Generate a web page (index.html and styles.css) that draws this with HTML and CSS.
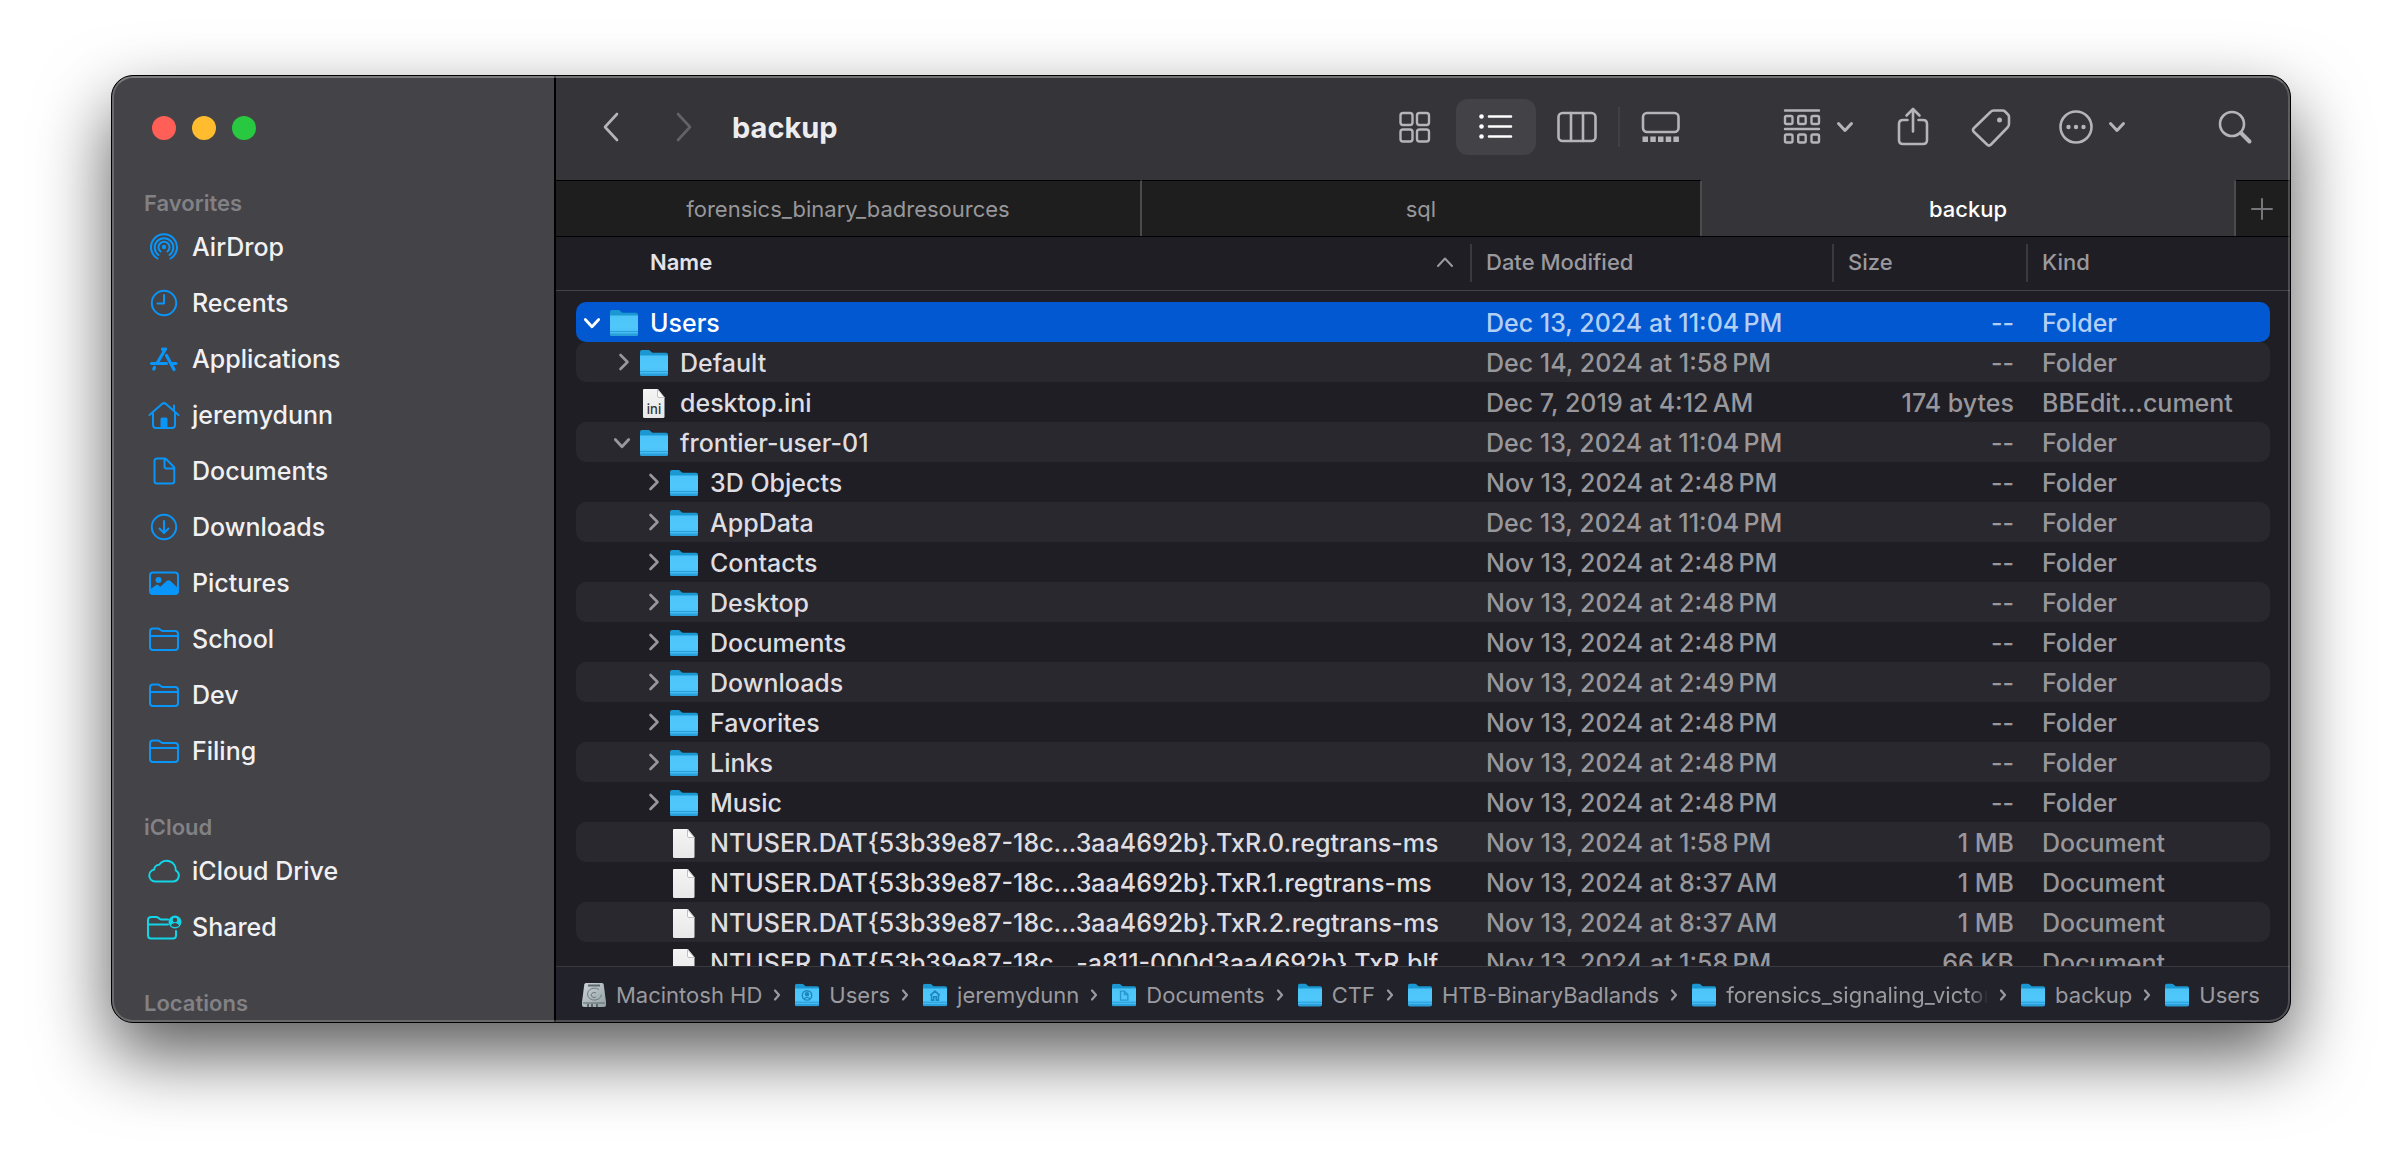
FILE: index.html
```html
<!DOCTYPE html>
<html lang="en">
<head>
<meta charset="utf-8">
<meta name="viewport" content="width=device-width, initial-scale=1">
<title>backup</title>
<link rel="stylesheet" href="styles.css">
</head>
<body>
<svg class="sprite" width="0" height="0" aria-hidden="true">
  <defs>
    <linearGradient id="folder-front" x1="0" y1="0" x2="0" y2="1">
      <stop offset="0" stop-color="#4cc4f8"/><stop offset=".6" stop-color="#50c8fc"/><stop offset="1" stop-color="#3eb4ee"/>
    </linearGradient>
    <linearGradient id="paper" x1="0" y1="0" x2="0" y2="1">
      <stop offset="0" stop-color="#f4f4f4"/><stop offset="1" stop-color="#e8e8e8"/>
    </linearGradient>
    <linearGradient id="disk" x1="0" y1="0" x2="1" y2="1">
      <stop offset="0" stop-color="#ccd5d8"/><stop offset="1" stop-color="#93a0a5"/>
    </linearGradient>
    <symbol id="folder" viewBox="0 0 28 26">
      <path fill="#1b98d2" d="M0 2a2 2 0 0 1 2-2h6c1 0 1.600.3 2.300 1l1 1c.5.5 1 .7 1.700.7H26a2 2 0 0 1 2 2V10H0z"/>
      <path fill="url(#folder-front)" d="M0 5.500h28V24a2 2 0 0 1-2 2H2a2 2 0 0 1-2-2z"/>
      <path fill="#2a9fda" d="M0 23.500h28v.5a2 2 0 0 1-2 2H2a2 2 0 0 1-2-2zM0 21h28v1H0z"/>
    </symbol>
    <symbol id="page" viewBox="0 0 24 29">
      <path fill="url(#paper)" d="M1.500 0H16l6.500 8.500v19a1.500 1.500 0 0 1-1.500 1.500H2.500A1.500 1.500 0 0 1 1 27.500V.5z"/>
      <path fill="#fff" stroke="#b4b4b4" stroke-width=".8" d="M15.500.5v6.500a1.500 1.500 0 0 0 1.500 1.500h5.500z"/>
    </symbol>
    <symbol id="right" viewBox="0 0 24 24"><path fill="none" stroke="currentColor" stroke-width="2.600" stroke-linecap="round" stroke-linejoin="round" d="m10.500 4 7 7-7 7"/></symbol>
    <symbol id="down" viewBox="0 0 24 24"><path fill="none" stroke="currentColor" stroke-width="2.800" stroke-linecap="round" stroke-linejoin="round" d="m5.300 8.500 6.700 7.200 6.700-7.200"/></symbol>
    <symbol id="crumb" viewBox="0 0 8 14"><path fill="none" stroke="currentColor" stroke-width="2.200" stroke-linecap="round" stroke-linejoin="round" d="m2 2.500 4 4.500-4 4.500"/></symbol>
    <symbol id="menu" viewBox="0 0 18 12"><path fill="none" stroke="currentColor" stroke-width="3" stroke-linecap="round" stroke-linejoin="round" d="m2.500 2.500 6.500 7 6.500-7"/></symbol>
    <symbol id="outline-folder" viewBox="0 0 32 32"><path d="M2 24V8.500Q2 5.500 5 5.500h4.500q1.500 0 2.500 1l1 .8q.8.700 2 .7H27q3 0 3 3V24q0 3-3 3H5q-3 0-3-3zM2 13h28"/></symbol>
  </defs>
</svg>

<div class="window">
  <aside class="sidebar">
    <div class="lights">
      <button class="light close" aria-label="Close"></button>
      <button class="light minimize" aria-label="Minimize"></button>
      <button class="light zoom" aria-label="Zoom"></button>
    </div>
    <nav aria-label="Places">
      <h2 class="group">Favorites</h2>
      <a class="place" href="#airdrop"><svg viewBox="0 0 32 32"><circle cx="16" cy="16" r="2.200" fill="currentColor" stroke="none"/><path d="M12.500 20.500a5.500 5.500 0 1 1 7 0M10.500 24a9.300 9.300 0 1 1 11 0M9.500 27.500a13 13 0 1 1 13 0"/></svg>AirDrop</a>
      <a class="place" href="#recents"><svg viewBox="0 0 32 32"><circle cx="16" cy="16" r="12.200"/><path d="M16 8v8.500H9.500"/></svg>Recents</a>
      <a class="place" href="#applications"><svg viewBox="0 0 32 32"><path stroke-width="3.200" d="M17.500 6 9.500 19.500M14.500 6l1.500 2.500M18.500 12.500 26 26.500M3.500 20.500h15M24.500 20.500h3.500M6.500 24.500 5.800 26"/></svg>Applications</a>
      <a class="place" href="#home"><svg viewBox="0 0 32 32"><path d="M1.500 16 14 5q2-1.700 4 0L30.500 16M5 14v11.500Q5 29 8 29h16q3 0 3-3V14M26 11.500V6.500"/><path fill="currentColor" stroke="none" d="M12.500 28.500V20q0-1.500 1.500-1.500h4q1.500 0 1.500 1.500v8.500z"/></svg>jeremydunn</a>
      <a class="place" href="#documents"><svg viewBox="0 0 32 32"><path d="M9 3.500h7.500q1 0 2 1l7 7q.8.800.8 2V26q0 2.500-2.500 2.500H9q-2.500 0-2.500-2.500V6Q6.500 3.500 9 3.500zM16.500 4v7.500q0 2 2 2H26"/></svg>Documents</a>
      <a class="place" href="#downloads"><svg viewBox="0 0 32 32"><circle cx="16" cy="16" r="12.200"/><path d="M16 10v11.500M11.500 17.500 16 22l4.500-4.500"/></svg>Downloads</a>
      <a class="place" href="#pictures"><svg viewBox="0 0 32 32"><rect x="2" y="5.500" width="28" height="21.500" rx="3"/><circle cx="10.500" cy="13" r="3" fill="currentColor" stroke="none"/><path fill="currentColor" d="m3 23 6-4.500 3.500 2.500 7-6.500q1-.7 2 0l8 7.500v2.500q0 1.500-2 1.500h-23q-1.500 0-1.500-1.500z"/></svg>Pictures</a>
      <a class="place" href="#school"><svg><use href="#outline-folder"/></svg>School</a>
      <a class="place" href="#dev"><svg><use href="#outline-folder"/></svg>Dev</a>
      <a class="place" href="#filing"><svg><use href="#outline-folder"/></svg>Filing</a>
      <h2 class="group">iCloud</h2>
      <a class="place cloud" href="#icloud-drive"><svg viewBox="0 0 32 32"><path d="M7 26.500a6 6 0 0 1-.8-11.900 5 5 0 0 1 5-4.800 9 9 0 0 1 16.500 5.500A6 6 0 0 1 25.500 26.500z"/></svg>iCloud Drive</a>
      <a class="place cloud" href="#shared"><svg viewBox="0 0 32 32"><path d="M20 8.500h-6.500q-1 0-2-.8l-1-.8q-1-.9-2.200-.9H3.500Q0 6 0 9v15.500q0 3 3 3h22q3 0 3-3V20M0 13.500h20"/><circle cx="27" cy="11" r="6.500" fill="currentColor" stroke="none"/><circle cx="27" cy="9" r="2.300" class="cut"/><path class="cut" d="M22.800 14.500q1.200-2.500 4.200-2.500t4.200 2.500q-1.700 1.500-4.200 1.500t-4.200-1.500z"/></svg>Shared</a>
      <h2 class="group">Locations</h2>
    </nav>
  </aside>

  <main class="main">
    <header class="toolbar">
      <button class="nav" aria-label="Back"><svg width="20" height="32" viewBox="0 0 20 32"><path d="M16 3 4 16l12 13"/></svg></button>
      <button class="nav" aria-label="Forward" disabled><svg width="20" height="32" viewBox="0 0 20 32"><path d="m4 3 12 13L4 29"/></svg></button>
      <h1 class="title">backup</h1>
      <div class="views">
        <button class="view" aria-label="Icons"><svg width="40" height="40" viewBox="0 0 40 40"><g stroke-width="2.400"><rect x="5.500" y="6" width="12" height="12" rx="2.500"/><rect x="22" y="6" width="12" height="12" rx="2.500"/><rect x="5.500" y="22.500" width="12" height="12" rx="2.500"/><rect x="22" y="22.500" width="12" height="12" rx="2.500"/></g></svg></button>
        <button class="view" aria-label="List" aria-pressed="true"><svg width="40" height="40" viewBox="0 0 40 40"><path d="M13 9.500h22M13 19.500h22M13 29.500h22" stroke-width="2.600"/><g fill="currentColor" stroke="none"><circle cx="5.500" cy="9.500" r="2.300"/><circle cx="5.500" cy="19.500" r="2.300"/><circle cx="5.500" cy="29.500" r="2.300"/></g></svg></button>
        <button class="view" aria-label="Columns"><svg width="40" height="40" viewBox="0 0 40 40"><rect x="1.500" y="6" width="37" height="28" rx="4"/><path d="M14 6v28M26 6v28"/></svg></button>
        <span class="split"></span>
        <button class="view" aria-label="Gallery"><svg width="40" height="40" viewBox="0 0 40 40"><rect x="2" y="6" width="35.500" height="19" rx="4"/><path fill="currentColor" stroke="none" d="M1.500 29.500h5.500V35H1.500zm7.800 0h5.500V35H9.300zm7.700 0h5.500V35H17zm7.700 0h5.500V35h-5.500zm7.700 0h5.500V35h-5.500z"/></svg></button>
      </div>
      <div class="tools">
        <button class="tool" aria-label="Group"><svg width="40" height="40" viewBox="0 0 40 40"><path d="M3 3.500h34M3 22h34" stroke-width="2.400"/><g stroke-width="2.400"><rect x="3" y="9" width="7.500" height="8" rx="1.500"/><rect x="16.200" y="9" width="7.500" height="8" rx="1.500"/><rect x="29.500" y="9" width="7.500" height="8" rx="1.500"/><rect x="3" y="27.500" width="7.500" height="8" rx="1.500"/><rect x="16.200" y="27.500" width="7.500" height="8" rx="1.500"/><rect x="29.500" y="27.500" width="7.500" height="8" rx="1.500"/></g></svg><svg width="18" height="12"><use href="#menu"/></svg></button>
        <button class="tool share" aria-label="Share"><svg width="40" height="40" viewBox="0 0 40 40"><path d="M14.500 13H10q-4 0-4 4v16q0 4 4 4h20q4 0 4-4V17q0-4-4-4h-4.500M20 24.500V2.500M13.500 8.500l6.500-6.500 6.500 6.500"/></svg></button>
        <button class="tool tags" aria-label="Tags"><svg width="40" height="40" viewBox="0 0 40 40"><path d="M22.500 3.500h9q1.500 0 2.500 1l3 3q1 1 1 2.500V17q0 2-1.500 3.500L20 37.500q-2 2-4 0L3 25q-2-2 0-4L19.500 5q1.300-1.500 3-1.500z"/><circle cx="28.500" cy="13" r="2.500" fill="currentColor" stroke="none"/></svg></button>
        <button class="tool more" aria-label="More"><svg width="40" height="40" viewBox="0 0 40 40"><circle cx="20" cy="20" r="15.500"/><g fill="currentColor" stroke="none"><circle cx="12.500" cy="20" r="2.200"/><circle cx="20" cy="20" r="2.200"/><circle cx="27.500" cy="20" r="2.200"/></g></svg><svg width="18" height="12"><use href="#menu"/></svg></button>
        <button class="tool search" aria-label="Search"><svg width="40" height="40" viewBox="0 0 40 40"><circle cx="17" cy="17" r="12"/><path d="M26 26l8.500 8.500" stroke-width="4"/></svg></button>
      </div>
    </header>

    <div class="tabs" role="tablist">
      <button class="tab wide" role="tab">forensics_binary_badresources</button>
      <button class="tab" role="tab">sql</button>
      <button class="tab narrow" role="tab" aria-selected="true">backup</button>
      <button class="add" aria-label="New tab"><svg width="24" height="24" viewBox="0 0 24 24"><path d="M12 2v20M2 12h20"/></svg></button>
    </div>

    <table class="files">
      <thead>
        <tr><th scope="col" class="sorted">Name<svg width="16" height="10" viewBox="0 0 16 10"><path d="m1 9 7-7.500L15 9"/></svg></th><th scope="col">Date Modified</th><th scope="col">Size</th><th scope="col">Kind</th></tr>
      </thead>
      <tbody>
        <tr class="selected"><td class="name"><button class="twist" aria-label="Collapse"><svg><use href="#down"/></svg></button><svg class="icon"><use href="#folder"/></svg>Users</td><td>Dec 13, 2024 at 11:04&#8201;PM</td><td>--</td><td>Folder</td></tr>
        <tr><td class="name l1"><button class="twist" aria-label="Expand"><svg><use href="#right"/></svg></button><svg class="icon"><use href="#folder"/></svg>Default</td><td>Dec 14, 2024 at 1:58&#8201;PM</td><td>--</td><td>Folder</td></tr>
        <tr><td class="name l1"><span class="twist"></span><svg class="icon paper" viewBox="0 0 28 29"><use href="#page" x="2" width="24" height="29"/><text x="14" y="25" class="ext">ini</text></svg>desktop.ini</td><td>Dec 7, 2019 at 4:12&#8201;AM</td><td>174 bytes</td><td>BBEdit...cument</td></tr>
        <tr><td class="name l1"><button class="twist" aria-label="Collapse"><svg><use href="#down"/></svg></button><svg class="icon"><use href="#folder"/></svg>frontier-user-01</td><td>Dec 13, 2024 at 11:04&#8201;PM</td><td>--</td><td>Folder</td></tr>
        <tr><td class="name l2"><button class="twist" aria-label="Expand"><svg><use href="#right"/></svg></button><svg class="icon"><use href="#folder"/></svg>3D Objects</td><td>Nov 13, 2024 at 2:48&#8201;PM</td><td>--</td><td>Folder</td></tr>
        <tr><td class="name l2"><button class="twist" aria-label="Expand"><svg><use href="#right"/></svg></button><svg class="icon"><use href="#folder"/></svg>AppData</td><td>Dec 13, 2024 at 11:04&#8201;PM</td><td>--</td><td>Folder</td></tr>
        <tr><td class="name l2"><button class="twist" aria-label="Expand"><svg><use href="#right"/></svg></button><svg class="icon"><use href="#folder"/></svg>Contacts</td><td>Nov 13, 2024 at 2:48&#8201;PM</td><td>--</td><td>Folder</td></tr>
        <tr><td class="name l2"><button class="twist" aria-label="Expand"><svg><use href="#right"/></svg></button><svg class="icon"><use href="#folder"/></svg>Desktop</td><td>Nov 13, 2024 at 2:48&#8201;PM</td><td>--</td><td>Folder</td></tr>
        <tr><td class="name l2"><button class="twist" aria-label="Expand"><svg><use href="#right"/></svg></button><svg class="icon"><use href="#folder"/></svg>Documents</td><td>Nov 13, 2024 at 2:48&#8201;PM</td><td>--</td><td>Folder</td></tr>
        <tr><td class="name l2"><button class="twist" aria-label="Expand"><svg><use href="#right"/></svg></button><svg class="icon"><use href="#folder"/></svg>Downloads</td><td>Nov 13, 2024 at 2:49&#8201;PM</td><td>--</td><td>Folder</td></tr>
        <tr><td class="name l2"><button class="twist" aria-label="Expand"><svg><use href="#right"/></svg></button><svg class="icon"><use href="#folder"/></svg>Favorites</td><td>Nov 13, 2024 at 2:48&#8201;PM</td><td>--</td><td>Folder</td></tr>
        <tr><td class="name l2"><button class="twist" aria-label="Expand"><svg><use href="#right"/></svg></button><svg class="icon"><use href="#folder"/></svg>Links</td><td>Nov 13, 2024 at 2:48&#8201;PM</td><td>--</td><td>Folder</td></tr>
        <tr><td class="name l2"><button class="twist" aria-label="Expand"><svg><use href="#right"/></svg></button><svg class="icon"><use href="#folder"/></svg>Music</td><td>Nov 13, 2024 at 2:48&#8201;PM</td><td>--</td><td>Folder</td></tr>
        <tr><td class="name l2"><span class="twist"></span><svg class="icon paper"><use href="#page"/></svg>NTUSER.DAT{53b39e87-18c...3aa4692b}.TxR.0.regtrans-ms</td><td>Nov 13, 2024 at 1:58&#8201;PM</td><td>1 MB</td><td>Document</td></tr>
        <tr><td class="name l2"><span class="twist"></span><svg class="icon paper"><use href="#page"/></svg>NTUSER.DAT{53b39e87-18c...3aa4692b}.TxR.1.regtrans-ms</td><td>Nov 13, 2024 at 8:37&#8201;AM</td><td>1 MB</td><td>Document</td></tr>
        <tr><td class="name l2"><span class="twist"></span><svg class="icon paper"><use href="#page"/></svg>NTUSER.DAT{53b39e87-18c...3aa4692b}.TxR.2.regtrans-ms</td><td>Nov 13, 2024 at 8:37&#8201;AM</td><td>1 MB</td><td>Document</td></tr>
        <tr><td class="name l2"><span class="twist"></span><svg class="icon paper"><use href="#page"/></svg>NTUSER.DAT{53b39e87-18c...-a811-000d3aa4692b}.TxR.blf</td><td>Nov 13, 2024 at 1:58&#8201;PM</td><td>66 KB</td><td>Document</td></tr>
      </tbody>
    </table>

    <nav class="path" aria-label="Path">
      <a href="#hd"><svg class="crumb-icon" viewBox="0 0 24 24"><path fill="url(#disk)" d="M4 0h16q1.500 0 1.700 1.500L24 19v3q0 2-2 2H2q-2 0-2-2v-3L2.300 1.500Q2.500 0 4 0z"/><path fill="#5c666c" d="M6 1.500h12v2H6zM1 19.500h22v1H1zM5 21h2v3H5zm4 0h2v3H9zm5 0h2v3h-2z"/><path fill="none" stroke="#6d787d" d="M17 6.500a7 6 0 1 0 2.500 5M14 10a3 2.500 0 1 0 0 4"/></svg>Macintosh HD</a><svg class="sep"><use href="#crumb"/></svg>
      <a href="#users"><svg class="crumb-icon" viewBox="0 0 28 26"><use href="#folder"/><g fill="none" stroke="#1b86bd" stroke-width="1.600"><circle cx="14" cy="13.500" r="5.500"/><circle cx="14" cy="12" r="1.800" fill="#1b86bd"/><path d="M10.500 17.500q3.500-3.500 7 0"/></g></svg>Users</a><svg class="sep"><use href="#crumb"/></svg>
      <a href="#jeremydunn"><svg class="crumb-icon" viewBox="0 0 28 26"><use href="#folder"/><path fill="none" stroke="#1b86bd" stroke-width="1.800" d="m8.500 13.500 5.500-5 5.500 5M10 12.500v6.500h2.500v-4h3v4H18v-6.500"/></svg>jeremydunn</a><svg class="sep"><use href="#crumb"/></svg>
      <a href="#docs"><svg class="crumb-icon" viewBox="0 0 28 26"><use href="#folder"/><path fill="none" stroke="#2a96cd" stroke-width="1.600" d="M10 8.500h4.500l4 4V19H10zM14.500 8.500v4h4"/></svg>Documents</a><svg class="sep"><use href="#crumb"/></svg>
      <a href="#ctf"><svg class="crumb-icon"><use href="#folder"/></svg>CTF</a><svg class="sep"><use href="#crumb"/></svg>
      <a href="#htb"><svg class="crumb-icon"><use href="#folder"/></svg>HTB-BinaryBadlands</a><svg class="sep"><use href="#crumb"/></svg>
      <a class="faded" href="#victorious"><svg class="crumb-icon"><use href="#folder"/></svg>forensics_signaling_victorious</a><svg class="sep"><use href="#crumb"/></svg>
      <a href="#backup"><svg class="crumb-icon"><use href="#folder"/></svg>backup</a><svg class="sep"><use href="#crumb"/></svg>
      <a href="#backup-users"><svg class="crumb-icon"><use href="#folder"/></svg>Users</a>
    </nav>
  </main>
</div>
</body>
</html>
```
FILE: styles.css
```css
* { box-sizing: border-box; }

body {
  margin: 0;
  height: 100vh;
  padding: 75px 111px 147px;
  display: flex;
  background: #fff;
  font-family: Inter, "Liberation Sans", sans-serif;
  font-size: 25px;
  color: #dedde1;
}

button {
  margin: 0;
  padding: 0;
  border: 0;
  background: none;
  font: inherit;
  color: inherit;
}

a { color: inherit; text-decoration: none; }
svg { flex: none; display: block; }
.sprite { position: absolute; }

.window {
  position: relative;
  flex: 1;
  min-width: 0;
  display: flex;
  overflow: hidden;
  border: 1px solid #000;
  border-radius: 22px;
  background: #1f1e25;
  box-shadow: 0 32px 72px rgba(0, 0, 0, .65);
}

/* light rim drawn over the window's edge */
.window::after {
  content: "";
  position: absolute;
  inset: 0;
  border: 2px solid rgba(255, 255, 255, .2);
  border-top-color: rgba(255, 255, 255, .3);
  border-radius: 21px;
  pointer-events: none;
}

/* Sidebar */
.sidebar {
  flex: none;
  width: 444px;
  border-right: 2px solid #000;
  background: #444347;
}

.lights { display: flex; gap: 16px; padding: 40px 40px 15px; }
.light { width: 24px; height: 24px; border-radius: 50%; }
.close { background: #ff5f57; }
.minimize { background: #febc2e; }
.zoom { background: #28c840; }

.group {
  margin: 0;
  height: 64px;
  padding: 33px 32px 0;
  font-size: 22px;
  line-height: 30px;
  font-weight: 600;
  color: #828185;
}

.place {
  display: flex;
  align-items: center;
  gap: 12px;
  height: 56px;
  padding-left: 36px;
  font-weight: 500;
  color: #f1f0f3;
}

.place svg {
  width: 32px;
  height: 32px;
  overflow: visible;
  color: #0a95f8;
  fill: none;
  stroke: #0a95f8;
  stroke-width: 2;
  stroke-linecap: round;
  stroke-linejoin: round;
}
.cloud svg { color: #12d6e8; stroke: #12d6e8; }
.place .cut { fill: #444347; stroke: none; }

/* Toolbar */
.main { flex: 1; min-width: 0; display: flex; flex-direction: column; }

.toolbar {
  flex: none;
  display: flex;
  align-items: center;
  height: 104px;
  padding: 0 35px 2px 45px;
  background: #353438;
  color: #b5b4b8;
}
.toolbar svg, .add svg {
  fill: none;
  stroke: currentColor;
  stroke-width: 2.6px;
  stroke-linecap: round;
  stroke-linejoin: round;
}

.nav { width: 20px; margin-right: 53px; }
.nav:disabled { color: #636266; margin-right: 38px; }
.title { margin: 0; font-size: 29px; font-weight: 700; color: #edecef; }

.views { display: flex; align-items: center; gap: 1px; margin-left: auto; }
.view, .tool { display: flex; align-items: center; justify-content: center; }
.view { width: 80px; height: 56px; border-radius: 12px; }
.view[aria-pressed="true"] { background: #434246; color: #fff; }
.split { width: 2px; height: 40px; background: #414044; }

.tools { display: flex; align-items: center; margin-left: 81px; }
.tool { gap: 14px; }
.share { margin-left: 39px; }
.tags { margin-left: 38px; }
.more { margin-left: 45px; gap: 12px; }
.search { margin-left: 89px; }

/* Tabs */
.tabs {
  flex: none;
  display: flex;
  height: 57px;
  border-bottom: 1px solid #000;
  font-size: 22px;
  color: #98979a;
}
.tab {
  flex: 560 1 0;
  border-top: 1px solid #000;
  border-right: 2px solid #4b4a4e;
  background: #1e1e1f;
}
.tab.wide { flex-grow: 586; }
.tab.narrow { flex-grow: 534; }
.tab[aria-selected="true"] {
  border-top-color: #353438;
  background: #353438;
  color: #fff;
  font-weight: 500;
}
.add {
  flex: none;
  display: flex;
  align-items: center;
  justify-content: center;
  width: 54px;
  padding-right: 2px;
  border-top: 1px solid #000;
  background: #1e1e1f;
  color: #77767a;
}
.add svg { stroke-width: 2px; }

/* File list */
.files {
  flex: 1;
  min-height: 0;
  display: flex;
  flex-direction: column;
  overflow: hidden;
}
.files thead {
  display: block;
  flex: none;
  padding: 7px 20px 8px;
  border-bottom: 1px solid #444348;
}
.files tbody { display: block; padding: 11px 20px 0; }
.files tr {
  display: grid;
  grid-template-columns: minmax(0, 1fr) 362px 194px 244px;
}
.files th {
  height: 38px;
  padding: 0 14px;
  border-left: 2px solid #3a393f;
  font-size: 22px;
  line-height: 36px;
  font-weight: 500;
  text-align: left;
  color: #9a999e;
}
.files .sorted {
  display: flex;
  align-items: center;
  justify-content: space-between;
  padding: 0 17px 2px 74px;
  border-left: 0;
  font-weight: 600;
  color: #e4e3e7;
}
.sorted svg { fill: none; stroke: #9a999e; stroke-width: 2; stroke-linecap: round; stroke-linejoin: round; }

.files tbody tr {
  height: 40px;
  border-radius: 10px;
  line-height: 42px;
  font-weight: 500;
  color: #98979c;
}
.files tbody tr:nth-child(even) { background: #29282e; }
.files td { height: 40px; padding: 0 0 0 16px; white-space: nowrap; }
.files td:nth-child(3) { padding: 0 12px 0 0; text-align: right; }
.files .name {
  display: flex;
  align-items: center;
  padding: 2px 0 0 4px;
  color: #dedde1;
}
.files .l1 { padding-left: 34px; }
.files .l2 { padding-left: 64px; }
.twist { flex: none; width: 24px; height: 24px; margin-right: 6px; color: #98979c; }
.twist svg { width: 24px; height: 24px; }
.icon { width: 28px; height: 26px; margin-right: 12px; }
.paper { height: 29px; }
.ext { font-size: 13px; font-weight: 500; fill: #333; text-anchor: middle; }

.files tbody .selected { background: #0158d1; color: #b3cff3; }
.selected .name, .selected .twist { color: #fff; }

/* Path bar */
.path {
  flex: none;
  display: flex;
  align-items: center;
  height: 56px;
  padding: 0 30px 0 26px;
  border-top: 1px solid #3a393f;
  background: #22222a;
  font-size: 22px;
  color: #9b9a9f;
}
.path a { flex: none; display: flex; align-items: center; gap: 10px; white-space: nowrap; }
.path .faded {
  flex: 0 1 auto;
  min-width: 0;
  overflow: hidden;
  -webkit-mask-image: linear-gradient(to left, transparent 8px, #000 26px);
  mask-image: linear-gradient(to left, transparent 8px, #000 26px);
}
.crumb-icon { width: 24px; height: 24px; }
.sep { width: 8px; height: 14px; margin: 0 14px 0 11px; }
.faded + .sep { margin-left: 3px; }
```
